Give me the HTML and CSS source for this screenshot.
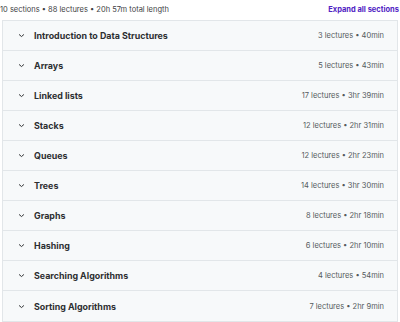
FILE: index.html
```html
<!DOCTYPE html>
<html lang="en">
<head>
  <meta charset="UTF-8" />
  <title>Course content</title>
  <link rel="stylesheet" href="styles.css">
</head>
<body>
  <div class="summary">
    <span>10 sections • 88 lectures • 20h 57m total length</span>
    <a class="expand">Expand all sections</a>
  </div>

  <div class="sections">
    <div class="row"><span class="chev"><svg viewBox="0 0 10 6"><path d="M1.5 1.5 L5 4.5 L8.5 1.5"/></svg></span><span class="title">Introduction to Data Structures</span><span class="meta">3 lectures • 40min</span></div>
    <div class="row"><span class="chev"><svg viewBox="0 0 10 6"><path d="M1.5 1.5 L5 4.5 L8.5 1.5"/></svg></span><span class="title">Arrays</span><span class="meta">5 lectures • 43min</span></div>
    <div class="row"><span class="chev"><svg viewBox="0 0 10 6"><path d="M1.5 1.5 L5 4.5 L8.5 1.5"/></svg></span><span class="title">Linked lists</span><span class="meta">17 lectures • 3hr 39min</span></div>
    <div class="row"><span class="chev"><svg viewBox="0 0 10 6"><path d="M1.5 1.5 L5 4.5 L8.5 1.5"/></svg></span><span class="title">Stacks</span><span class="meta">12 lectures • 2hr 31min</span></div>
    <div class="row"><span class="chev"><svg viewBox="0 0 10 6"><path d="M1.5 1.5 L5 4.5 L8.5 1.5"/></svg></span><span class="title">Queues</span><span class="meta">12 lectures • 2hr 23min</span></div>
    <div class="row"><span class="chev"><svg viewBox="0 0 10 6"><path d="M1.5 1.5 L5 4.5 L8.5 1.5"/></svg></span><span class="title">Trees</span><span class="meta">14 lectures • 3hr 30min</span></div>
    <div class="row"><span class="chev"><svg viewBox="0 0 10 6"><path d="M1.5 1.5 L5 4.5 L8.5 1.5"/></svg></span><span class="title">Graphs</span><span class="meta">8 lectures • 2hr 18min</span></div>
    <div class="row"><span class="chev"><svg viewBox="0 0 10 6"><path d="M1.5 1.5 L5 4.5 L8.5 1.5"/></svg></span><span class="title">Hashing</span><span class="meta">6 lectures • 2hr 10min</span></div>
    <div class="row"><span class="chev"><svg viewBox="0 0 10 6"><path d="M1.5 1.5 L5 4.5 L8.5 1.5"/></svg></span><span class="title">Searching Algorithms</span><span class="meta">4 lectures • 54min</span></div>
    <div class="row"><span class="chev"><svg viewBox="0 0 10 6"><path d="M1.5 1.5 L5 4.5 L8.5 1.5"/></svg></span><span class="title">Sorting Algorithms</span><span class="meta">7 lectures • 2hr 9min</span></div>
  </div>
</body>
</html>
```

FILE: styles.css
```css
* { box-sizing: border-box; }

html, body {
  margin: 0;
  padding: 0;
  background: #fff;
  color: #2d2f31;
  font-family: Inter, "Noto Sans", sans-serif;
}

body {
  padding: 0 2px 0 2px;
}

.summary {
  display: flex;
  justify-content: space-between;
  align-items: center;
  height: 20px;
  padding-bottom: 2px;
  font-size: 7.5px;
  color: #3e4143;
}

.summary span {
  margin-left: -2px;
}

.expand {
  color: #5022c3;
  font-weight: 700;
  font-size: 7.5px;
  margin-right: -1px;
}

.sections {
  border: 1px solid #e2e6e9;
  width: 396px;
}

.row {
  display: flex;
  align-items: center;
  height: 30px;
  background: #f7f9fa;
  border-bottom: 1px solid #e2e6e9;
  padding: 0 13px 0 15px;
}

.row:last-child {
  border-bottom: none;
}

.chev {
  display: flex;
  width: 16px;
}

.chev svg {
  width: 7px;
  height: 5px;
  fill: none;
  stroke: #2d2f31;
  stroke-width: 1.4;
}

.title {
  flex: 1;
  font-weight: 700;
  font-size: 8.9px;
  color: #2d2f31;
}

.meta {
  font-size: 7.5px;
  color: #55595c;
}
```
